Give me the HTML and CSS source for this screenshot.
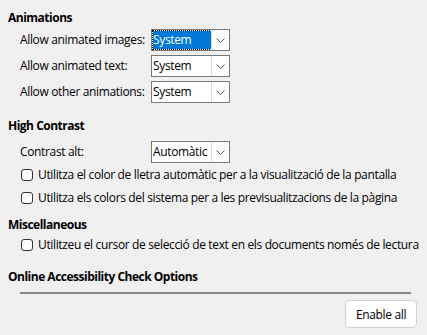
FILE: index.html
```html
<!DOCTYPE html>
<html>
<head>
<meta charset="utf-8">
<link rel="stylesheet" href="styles.css">
</head>
<body>
<div class="page">
  <section class="group">
    <h2 class="heading">Animations</h2>
    <div class="rows">
      <span class="label">Allow animated images:</span>
      <div class="combo focused"><span class="value">System</span><span class="btn"><svg width="9" height="5" viewBox="0 0 9 5"><path d="M0.5 0.5 L4.5 4.5 L8.5 0.5" fill="none" stroke="#555" stroke-width="1"/></svg></span></div>
      <span class="label">Allow animated text:</span>
      <div class="combo"><span class="value">System</span><span class="btn"><svg width="9" height="5" viewBox="0 0 9 5"><path d="M0.5 0.5 L4.5 4.5 L8.5 0.5" fill="none" stroke="#555" stroke-width="1"/></svg></span></div>
      <span class="label">Allow other animations:</span>
      <div class="combo"><span class="value">System</span><span class="btn"><svg width="9" height="5" viewBox="0 0 9 5"><path d="M0.5 0.5 L4.5 4.5 L8.5 0.5" fill="none" stroke="#555" stroke-width="1"/></svg></span></div>
    </div>
  </section>
  <section class="group contrast">
    <h2 class="heading">High Contrast</h2>
    <div class="rows">
      <span class="label">Contrast alt:</span>
      <div class="combo"><span class="value">Automàtic</span><span class="btn"><svg width="9" height="5" viewBox="0 0 9 5"><path d="M0.5 0.5 L4.5 4.5 L8.5 0.5" fill="none" stroke="#555" stroke-width="1"/></svg></span></div>
    </div>
    <label class="check"><span class="box"></span>Utilitza el color de lletra automàtic per a la visualització de la pantalla</label>
    <label class="check"><span class="box"></span>Utilitza els colors del sistema per a les previsualitzacions de la pàgina</label>
  </section>
  <section class="group misc">
    <h2 class="heading">Miscellaneous</h2>
    <label class="check"><span class="box"></span>Utilitzeu el cursor de selecció de text en els documents només de lectura</label>
  </section>
  <section class="group online">
    <h2 class="heading">Online Accessibility Check Options</h2>
    <div class="rule"></div>
    <div class="actions"><button class="button">Enable all</button></div>
  </section>
</div>
</body>
</html>
```
FILE: styles.css
```css
html, body {
  margin: 0;
  background: #f0f0f0;
}
body {
  font-family: "Open Sans", "Noto Sans", sans-serif;
  font-size: 12px;
  letter-spacing: -0.35px;
  color: #000;
}
.page {
  padding: 10px 8px 0 8px;
  display: flex;
  flex-direction: column;
}
.heading {
  font-size: 12px;
  font-weight: 700;
  margin: 0;
  line-height: 16px;
  letter-spacing: -0.5px;
}
.group {
  display: flex;
  flex-direction: column;
}
.group.contrast {
  margin-top: 15px;
}
.group.misc {
  margin-top: 8px;
}
.group.online {
  margin-top: 13px;
}
.rows {
  display: grid;
  grid-template-columns: 131px 79px;
  row-gap: 4px;
  padding-left: 12px;
  margin-top: 3px;
  align-items: center;
}
.contrast .rows {
  margin-top: 7px;
}
.label {
  line-height: 16px;
  white-space: nowrap;
}
.combo {
  height: 22px;
  box-sizing: border-box;
  border: 1px solid #7a7a7a;
  background: #fff;
  display: flex;
  align-items: stretch;
}
.combo .value {
  flex: 1;
  line-height: 20px;
  padding-left: 1px;
  white-space: nowrap;
  overflow: hidden;
}
.combo.focused .value {
  background: #0078d7;
  color: #fff;
  outline: 1px dotted #000;
  outline-offset: 0;
  margin: 1px 0 1px 1px;
  line-height: 18px;
  padding-left: 0;
}
.combo .btn {
  width: 17px;
  flex: none;
  border-left: 1px solid #dadada;
  display: flex;
  align-items: center;
  justify-content: center;
}
.check {
  display: flex;
  align-items: center;
  gap: 5px;
  padding-left: 13px;
  height: 23px;
  white-space: nowrap;
}
.box {
  width: 12px;
  height: 12px;
  flex: none;
  box-sizing: border-box;
  border: 1px solid #333;
  border-radius: 3px;
  background: #fff;
}
.rule {
  margin: 7px 8px 0 12px;
  height: 2px;
  background: #868a91;
}
.actions {
  display: flex;
  justify-content: flex-end;
  padding: 6px 2px 0 0;
}
.button {
  font-family: inherit;
  font-size: 12px;
  letter-spacing: -0.35px;
  background: #fff;
  border: 1px solid #d0d0d0;
  border-radius: 4px;
  height: 28px;
  width: 72px;
  padding: 0;
  color: #000;
}
```
